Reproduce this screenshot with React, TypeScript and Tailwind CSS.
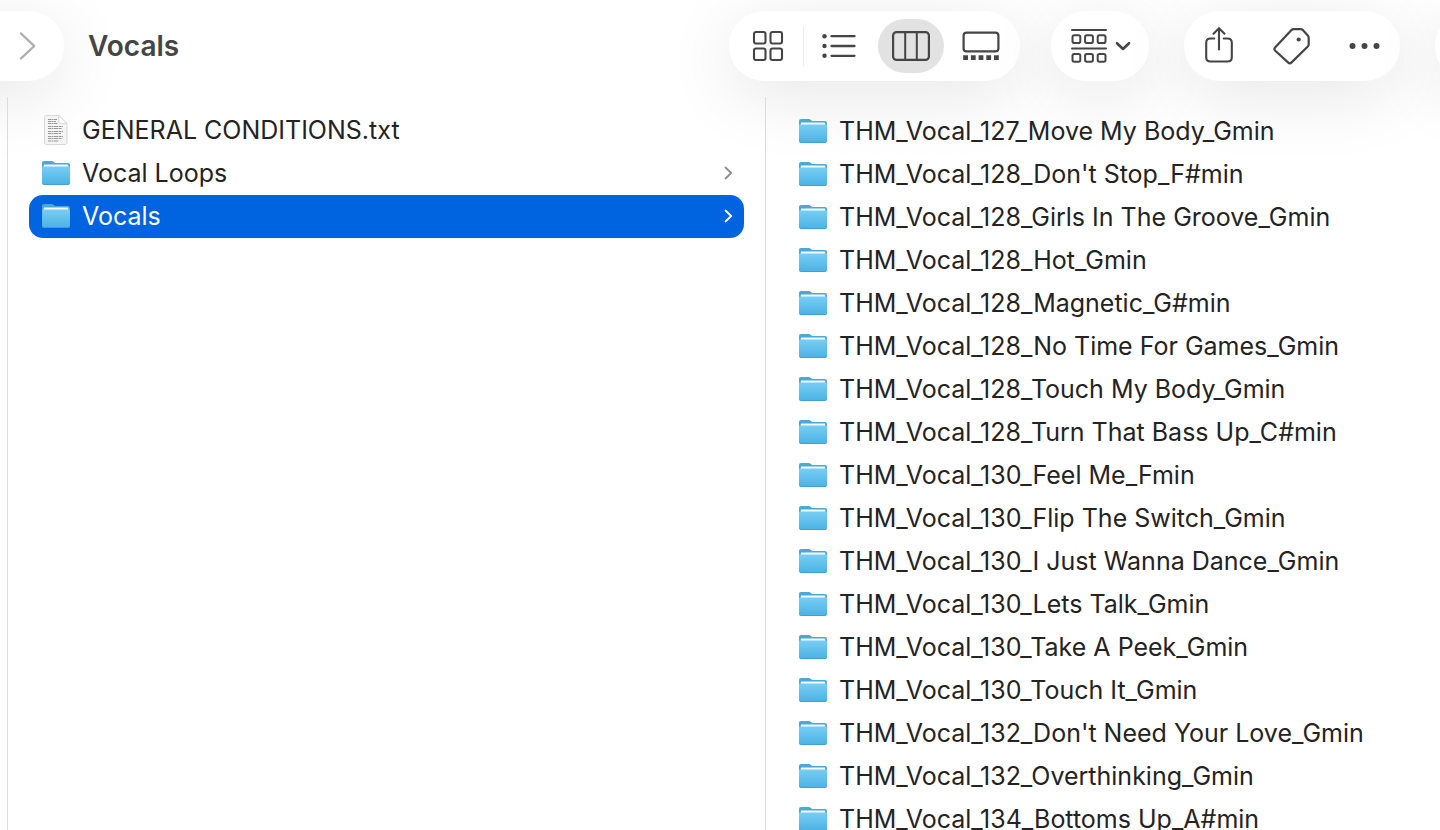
import { useState, type ReactNode } from 'react';

const libraryItems = [
  { name: 'GENERAL CONDITIONS.txt', kind: 'file' },
  { name: 'Vocal Loops', kind: 'folder' },
  { name: 'Vocals', kind: 'folder' },
];

const vocalFolders = [
  'THM_Vocal_127_Move My Body_Gmin',
  "THM_Vocal_128_Don't Stop_F#min",
  'THM_Vocal_128_Girls In The Groove_Gmin',
  'THM_Vocal_128_Hot_Gmin',
  'THM_Vocal_128_Magnetic_G#min',
  'THM_Vocal_128_No Time For Games_Gmin',
  'THM_Vocal_128_Touch My Body_Gmin',
  'THM_Vocal_128_Turn That Bass Up_C#min',
  'THM_Vocal_130_Feel Me_Fmin',
  'THM_Vocal_130_Flip The Switch_Gmin',
  'THM_Vocal_130_I Just Wanna Dance_Gmin',
  'THM_Vocal_130_Lets Talk_Gmin',
  'THM_Vocal_130_Take A Peek_Gmin',
  'THM_Vocal_130_Touch It_Gmin',
  "THM_Vocal_132_Don't Need Your Love_Gmin",
  'THM_Vocal_132_Overthinking_Gmin',
  'THM_Vocal_134_Bottoms Up_A#min',
];

function FolderIcon() {
  return (
    <svg width="28" height="26" viewBox="0 1 28 26" className="shrink-0" aria-hidden="true">
      <defs>
        <linearGradient id="folder-front" x1="0" y1="0" x2="0" y2="1">
          <stop offset="0" stopColor="#77cef4" />
          <stop offset="1" stopColor="#4bb1e4" />
        </linearGradient>
      </defs>
      <path
        d="M0 3.2C0 1.800.8 1 2.200 1h7.400c1 0 1.600.3 2.200.9l.8.7c.4.4.9.5 1.500.5h11.700c1.400 0 2.200.8 2.200 2.200V12H0z"
        fill="#4ba7d3"
      />
      <path d="M1.800 9V5.600c0-.6.4-1 1-1h22.400c.6 0 1 .4 1 1V9z" fill="#f4fbff" />
      <path
        d="M0 7.600c0-.8.6-1.100 1.600-1.100h24.800c1 0 1.600.3 1.600 1.100v15.200c0 1.400-.8 2.200-2.200 2.200H2.200C.8 25 0 24.200 0 22.800z"
        fill="url(#folder-front)"
      />
      <path d="M.5 23.400c.4.8 1 1.100 1.800 1.100h23.400c.8 0 1.400-.3 1.800-1.100" fill="none" stroke="#3c9dcc" strokeWidth=".8" />
    </svg>
  );
}

function DocumentIcon() {
  return (
    <svg width="28" height="32" viewBox="0 1 28 32" className="shrink-0" aria-hidden="true">
      <path
        d="M4.500 1.500h12.300L25 9.700V28.500c0 1.200-.7 2-2 2H4.500c-1.300 0-2-.8-2-2v-25c0-1.300.7-2 2-2z"
        fill="#f5f5f5"
        stroke="#d8d8d8"
      />
      <path d="M16.800 1.500v6.200c0 1.300.7 2 2 2H25z" fill="#fff" stroke="#cdcdcd" strokeWidth=".8" />
      <path
        d="M6 5.500h9M6 7.500h8M6 9.500h9.500M6 12.500h15M6 14.500h14M6 17.500h15M6 19.500h13M6 22.500h15M6 24.500h14M6 27h11"
        stroke="#969696"
        strokeWidth="1.200"
        strokeDasharray="3 .5 2 .5 4 .6"
      />
    </svg>
  );
}

function RowChevron() {
  return (
    <svg width="9" height="14" viewBox="0 1 9 14" fill="none" className="overflow-visible" aria-hidden="true">
      <path d="M1.500 1.500 7.200 7l-5.700 5.500" stroke="currentColor" strokeWidth="1.800" strokeLinecap="round" strokeLinejoin="round" />
    </svg>
  );
}

function GridIcon() {
  return (
    <svg width="32" height="32" viewBox="0 0 32 32" fill="none" stroke="currentColor" strokeWidth="2.100" aria-hidden="true">
      <rect x="2" y="2" width="11.500" height="11.500" rx="2" />
      <rect x="18.500" y="2" width="11.500" height="11.500" rx="2" />
      <rect x="2" y="18.500" width="11.500" height="11.500" rx="2" />
      <rect x="18.500" y="18.500" width="11.500" height="11.500" rx="2" />
    </svg>
  );
}

function ListIcon() {
  return (
    <svg width="34" height="26" viewBox="0 0 34 26" fill="none" aria-hidden="true">
      <g fill="currentColor">
        <circle cx="2.500" cy="3.200" r="2.200" />
        <circle cx="2.500" cy="13" r="2.200" />
        <circle cx="2.500" cy="22.800" r="2.200" />
      </g>
      <path d="M9.500 3.200H32.500M9.500 13H32.500M9.500 22.800H32.500" stroke="currentColor" strokeWidth="2.300" strokeLinecap="round" />
    </svg>
  );
}

function ColumnsIcon() {
  return (
    <svg width="38" height="30" viewBox="0 0 38 30" fill="none" stroke="currentColor" strokeWidth="2.200" aria-hidden="true">
      <rect x="1.100" y="1.100" width="35.800" height="27.800" rx="3.500" />
      <path d="M13.200 1v28M24.800 1v28" strokeWidth="2" />
    </svg>
  );
}

function GalleryIcon() {
  return (
    <svg width="38" height="30" viewBox="0 0 38 30" fill="none" aria-hidden="true">
      <rect x="1.600" y="1.600" width="34.800" height="18.800" rx="3" stroke="currentColor" strokeWidth="2.200" />
      <path d="M1.200 24.200h4.800v4.800h-4.800zM8.900 24.200h4.800v4.800h-4.800zM16.600 24.200h4.800v4.800h-4.800zM24.300 24.200h4.800v4.800h-4.800zM32 24.200h4.800v4.800h-4.800z" fill="currentColor" />
    </svg>
  );
}

function GroupIcon() {
  return (
    <svg width="36" height="36" viewBox="0 0 36 36" fill="none" stroke="currentColor" strokeWidth="2" aria-hidden="true">
      <path d="M1 2h34M1 20.500h34" strokeLinecap="round" />
      <rect x="1.500" y="7.200" width="7.800" height="7.800" rx="1.800" />
      <rect x="14.100" y="7.200" width="7.800" height="7.800" rx="1.800" />
      <rect x="26.700" y="7.200" width="7.800" height="7.800" rx="1.800" />
      <rect x="1.500" y="26" width="7.800" height="7.800" rx="1.800" />
      <rect x="14.100" y="26" width="7.800" height="7.800" rx="1.800" />
      <rect x="26.700" y="26" width="7.800" height="7.800" rx="1.800" />
    </svg>
  );
}

function ShareIcon() {
  return (
    <svg width="30" height="38" viewBox="1 0 30 38" fill="none" stroke="currentColor" strokeWidth="2.100" strokeLinecap="round" strokeLinejoin="round" aria-hidden="true">
      <path d="M10.300 11.500H6.500c-2.900 0-4.300 1.500-4.300 4.300v14.400c0 2.900 1.400 4.300 4.300 4.300h17c2.900 0 4.300-1.400 4.300-4.300V15.800c0-2.800-1.400-4.300-4.300-4.300h-3.800" />
      <path d="M15 22.500V1.200M9.500 6.700 15 1.200l5.500 5.500" />
    </svg>
  );
}

function TagIcon() {
  return (
    <svg width="38" height="38" viewBox="0 0 38 38" fill="none" aria-hidden="true">
      <path
        d="M20.700 2.200h6.900c.9 0 1.600.3 2.200.9l5 5.400c.6.600.9 1.300.9 2.200v6.600c0 .9-.3 1.600-.9 2.200L18.600 35.400c-1.200 1.200-2.400 1.200-3.600 0L2.300 23.800c-1.200-1.200-1.200-2.400 0-3.600L18.500 3.100c.6-.6 1.300-.9 2.200-.9z"
        stroke="currentColor"
        strokeWidth="2.200"
        strokeLinejoin="round"
      />
      <circle cx="25.700" cy="12.500" r="2.100" fill="currentColor" />
    </svg>
  );
}

function MoreIcon() {
  return (
    <svg width="32" height="8" viewBox="0 0 32 8" fill="currentColor" aria-hidden="true">
      <circle cx="4.500" cy="4" r="3" />
      <circle cx="16.500" cy="4" r="3" />
      <circle cx="28.500" cy="4" r="3" />
    </svg>
  );
}

const pill = 'flex h-[70px] shrink-0 items-center rounded-full bg-white shadow-[0_14px_70px_rgba(0,0,0,0.1)]';

interface ViewButtonProps {
  label: string;
  active: boolean;
  onClick: () => void;
  children: ReactNode;
}

function ViewButton({ label, active, onClick, children }: ViewButtonProps) {
  return (
    <button type="button" aria-label={label} aria-pressed={active} onClick={onClick} className="flex w-[70px] justify-center">
      <span className={`flex h-[54px] w-[66px] items-center justify-center rounded-full ${active ? 'bg-[#e2e2e2]' : ''}`}>
        {children}
      </span>
    </button>
  );
}

export default function App() {
  const [view, setView] = useState('columns');
  const [selected, setSelected] = useState('Vocals');

  return (
    <div className="flex h-screen flex-col overflow-hidden bg-white font-['Inter',sans-serif] text-[#232323]">
      {/* Toolbar */}
      <header className="flex h-[97px] shrink-0 items-start pt-[11px] text-[#454545]">
        <div className={`${pill} -ml-[70px] w-[134px] justify-end pr-7`}>
          <button type="button" aria-label="Forward" className="text-[#adadad]">
            <svg width="18" height="30" viewBox="0 0 18 30" fill="none" aria-hidden="true">
              <path d="M3 2.500 16.200 15 3 27.500" stroke="currentColor" strokeWidth="2.400" strokeLinecap="round" strokeLinejoin="round" />
            </svg>
          </button>
        </div>
        <h1 className="ml-6 flex h-[70px] items-center text-[28px] font-semibold">Vocals</h1>

        <div className={`${pill} ml-auto px-1`}>
          <ViewButton label="Icons" active={view === 'icons'} onClick={() => setView('icons')}>
            <GridIcon />
          </ViewButton>
          <span className="h-10 w-px bg-[#ececec]" />
          <ViewButton label="List" active={view === 'list'} onClick={() => setView('list')}>
            <ListIcon />
          </ViewButton>
          <div className="ml-0.5 flex">
            <ViewButton label="Columns" active={view === 'columns'} onClick={() => setView('columns')}>
              <ColumnsIcon />
            </ViewButton>
            <ViewButton label="Gallery" active={view === 'gallery'} onClick={() => setView('gallery')}>
              <GalleryIcon />
            </ViewButton>
          </div>
        </div>

        <button type="button" aria-label="Group by" className={`${pill} ml-[31px] gap-2 pl-5 pr-[18px]`}>
          <GroupIcon />
          <svg width="16" height="12" viewBox="0 0 16 12" fill="none" aria-hidden="true">
            <path d="M2 3.200 8 9l6-5.800" stroke="currentColor" strokeWidth="2.600" strokeLinecap="round" strokeLinejoin="round" />
          </svg>
        </button>

        <div className={`${pill} ml-[35px]`}>
          <button type="button" aria-label="Share" className="flex w-[72px] justify-center">
            <ShareIcon />
          </button>
          <button type="button" aria-label="Tags" className="flex w-[72px] justify-center">
            <TagIcon />
          </button>
          <button type="button" aria-label="More" className="flex w-[72px] justify-center">
            <MoreIcon />
          </button>
        </div>

        <div className={`${pill} ml-[35px] -mr-[65px] w-[70px]`} />
      </header>

      {/* Columns */}
      <main className="flex min-h-0 flex-1">
        <ul className="ml-[7px] w-[759px] shrink-0 border-x border-[#dcdcdc] px-[21px] pt-3">
          {libraryItems.map((item) => (
            <li key={item.name}>
              <button
                type="button"
                onClick={() => setSelected(item.name)}
                className={`flex h-[43px] w-full items-center gap-3 rounded-[14px] pl-[13px] pr-[11px] text-left text-[25px] ${
                  selected === item.name ? 'bg-[#0064e1] text-white' : ''
                }`}
              >
                {item.kind === 'file' ? <DocumentIcon /> : <FolderIcon />}
                <span>{item.name}</span>
                {item.kind === 'folder' && (
                  <span className={`ml-auto ${selected === item.name ? '' : 'text-[#8c8c8c]'}`}>
                    <RowChevron />
                  </span>
                )}
              </button>
            </li>
          ))}
        </ul>

        <ul className="min-w-0 flex-1 overflow-hidden px-5 pt-[13px]">
          {vocalFolders.map((name) => (
            <li key={name}>
              <button type="button" className="flex h-[43px] w-full items-center gap-3 whitespace-nowrap px-[13px] text-left text-[25px]">
                <FolderIcon />
                <span>{name}</span>
              </button>
            </li>
          ))}
        </ul>
      </main>
    </div>
  );
}
